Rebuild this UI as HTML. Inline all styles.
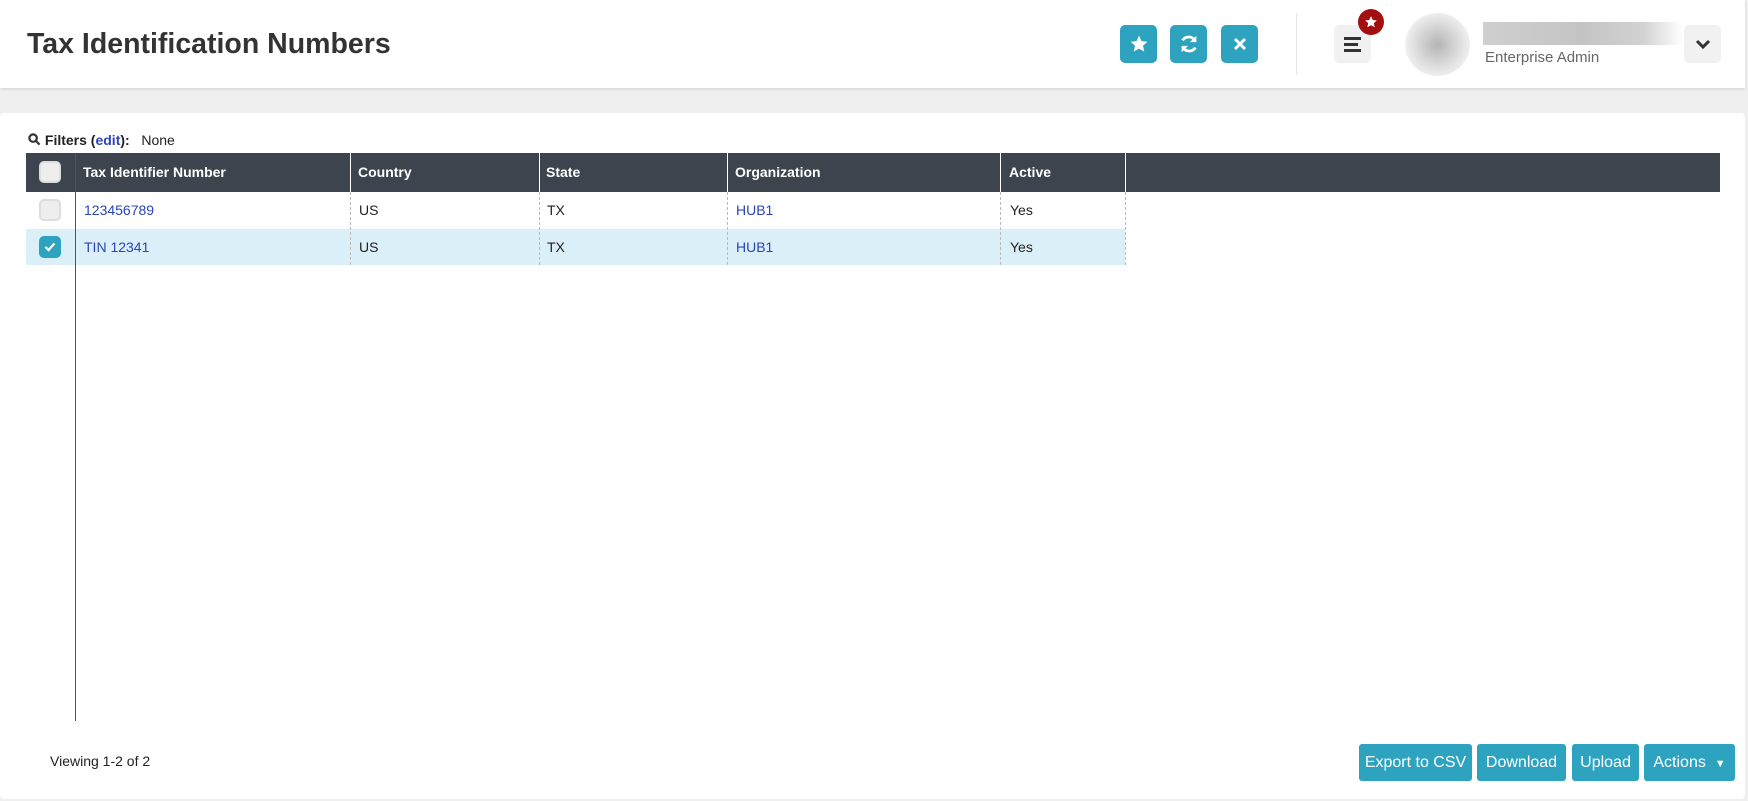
<!DOCTYPE html>
<html><head><style>
*{box-sizing:border-box;margin:0;padding:0}
body{width:1748px;height:801px;background:#efefef;font-family:"Liberation Sans",sans-serif;position:relative;overflow:hidden;color:#222}
.a{position:absolute}
.hdr{left:0;top:0;width:1745px;height:88px;background:#fff;box-shadow:0 1px 3px rgba(0,0,0,.12)}
.ib{background:#2ea3c0;border-radius:5px;width:37px;height:38px;display:flex;align-items:center;justify-content:center;color:#fff}
.gb{background:#f1f1f1;border-radius:5px;width:37px;height:38px}
.card{left:0;top:113px;width:1745px;height:686px;background:#fff;border-radius:4px}
.th{top:153px;height:39px;background:#3d444e;color:#fff;font-weight:bold;font-size:14px;line-height:39px}
.cell{font-size:14px;height:36px;line-height:36px}
.lnk{color:#2b44b8}
.btn{top:744px;height:37px;background:#2ea3c0;color:#fff;font-size:16px;line-height:37px;text-align:center;border-radius:3px}
.cb{width:22px;height:22px;border-radius:5px;background:#eee;border:2px solid #ddd}
</style></head><body>
<div class="a hdr"></div>
<div class="a" style="left:27px;top:28px;font-size:28.5px;font-weight:bold;color:#333">Tax Identification Numbers</div>
<div class="a ib" style="left:1120px;top:25px"><svg width="20" height="20" viewBox="0 0 24 24"><path fill="#fff" d="M12 2l3 6.5 7 .8-5.2 4.8 1.5 7L12 17.5 5.7 21l1.5-7L2 9.3l7-.8z"/></svg></div>
<div class="a ib" style="left:1170px;top:25px"><svg width="22" height="22" viewBox="0 0 24 24" fill="none" stroke="#fff" stroke-width="3"><path d="M19 9A8 8 0 0 0 5 8M5 15a8 8 0 0 0 14 1"/><path fill="#fff" stroke="none" d="M20 3v7h-7zM4 21v-7h7z"/></svg></div>
<div class="a ib" style="left:1221px;top:25px"><svg width="14" height="14" viewBox="0 0 14 14" stroke="#fff" stroke-width="3"><path d="M2 2l10 10M12 2L2 12"/></svg></div>
<div class="a" style="left:1296px;top:13px;width:1px;height:62px;background:#e6e6e6"></div>
<div class="a gb" style="left:1334px;top:25px"><div class="a" style="left:10px;top:12px;width:17px;height:3px;background:#333"></div><div class="a" style="left:10px;top:18px;width:14px;height:3px;background:#333"></div><div class="a" style="left:10px;top:24px;width:17px;height:3px;background:#333"></div></div>
<div class="a" style="left:1358px;top:9px;width:26px;height:26px;border-radius:50%;background:#a30f0f;display:flex;align-items:center;justify-content:center"><svg width="14" height="14" viewBox="0 0 24 24"><path fill="#fff" d="M12 2l3 6.5 7 .8-5.2 4.8 1.5 7L12 17.5 5.7 21l1.5-7L2 9.3l7-.8z"/></svg></div>
<div class="a" style="left:1405px;top:13px;width:65px;height:63px;border-radius:50%;background:radial-gradient(circle,#b4b4b4 0,#d6d6d6 40%,#f2f2f2 75%)"></div>
<div class="a" style="left:1483px;top:22px;width:200px;height:23px;background:linear-gradient(90deg,#cfcfcf,#c4c4c4 50%,#d2d2d2 80%,#fff)"></div>
<div class="a" style="left:1485px;top:49px;font-size:15px;color:#666">Enterprise Admin</div>
<div class="a gb" style="left:1684px;top:25px;display:flex;align-items:center;justify-content:center"><svg width="16" height="12" viewBox="0 0 16 12" fill="none" stroke="#333" stroke-width="3"><path d="M2 3l6 6 6-6"/></svg></div>

<div class="a card"></div>
<div class="a" style="left:28px;top:132px;font-size:14px"><svg width="13" height="13" viewBox="0 0 14 14" fill="none" stroke="#333" stroke-width="2.4" style="vertical-align:-1px"><circle cx="5.5" cy="5.5" r="4"/><path d="M8.5 8.5l4 4"/></svg> <b>Filters (<span style="color:#2b44b8">edit</span>):</b>&nbsp;&nbsp; None</div>
<div class="a th" style="left:26px;width:1694px"></div>
<div class="a cb" style="left:39px;top:161px"></div>
<div class="a" style="left:26px;top:229px;width:1099px;height:36px;background:#dbeff8"></div>
<div class="a" style="left:75px;top:153px;width:1px;height:568px;background:#555"></div>
<div class="a" style="left:350px;top:153px;width:1px;height:39px;background:#fff"></div>
<div class="a" style="left:539px;top:153px;width:1px;height:39px;background:#fff"></div>
<div class="a" style="left:727px;top:153px;width:1px;height:39px;background:#fff"></div>
<div class="a" style="left:1000px;top:153px;width:1px;height:39px;background:#fff"></div>
<div class="a" style="left:1125px;top:153px;width:1px;height:39px;background:#fff"></div>
<div class="a" style="left:350px;top:192px;height:73px;border-left:1px dashed #bbb"></div>
<div class="a" style="left:539px;top:192px;height:73px;border-left:1px dashed #bbb"></div>
<div class="a" style="left:727px;top:192px;height:73px;border-left:1px dashed #bbb"></div>
<div class="a" style="left:1000px;top:192px;height:73px;border-left:1px dashed #bbb"></div>
<div class="a" style="left:1125px;top:192px;height:73px;border-left:1px dashed #bbb"></div>
<div class="a th" style="left:83px">Tax Identifier Number</div>
<div class="a th" style="left:358px">Country</div>
<div class="a th" style="left:546px">State</div>
<div class="a th" style="left:735px">Organization</div>
<div class="a th" style="left:1009px">Active</div>
<div class="a cb" style="left:39px;top:199px"></div>
<div class="a" style="left:39px;top:236px;width:22px;height:22px;border-radius:5px;background:#2ea3c0;display:flex;align-items:center;justify-content:center"><svg width="12" height="10" viewBox="0 0 12 10" fill="none" stroke="#fff" stroke-width="2.2"><path d="M1.5 5l3 3 6-6.5"/></svg></div>
<div class="a cell lnk" style="left:84px;top:192px">123456789</div>
<div class="a cell" style="left:359px;top:192px">US</div>
<div class="a cell" style="left:547px;top:192px">TX</div>
<div class="a cell lnk" style="left:736px;top:192px">HUB1</div>
<div class="a cell" style="left:1010px;top:192px">Yes</div>
<div class="a cell lnk" style="left:84px;top:229px">TIN 12341</div>
<div class="a cell" style="left:359px;top:229px">US</div>
<div class="a cell" style="left:547px;top:229px">TX</div>
<div class="a cell lnk" style="left:736px;top:229px">HUB1</div>
<div class="a cell" style="left:1010px;top:229px">Yes</div>
<div class="a" style="left:50px;top:753px;font-size:14px">Viewing 1-2 of 2</div>
<div class="a btn" style="left:1359px;width:113px">Export to CSV</div>
<div class="a btn" style="left:1477px;width:89px">Download</div>
<div class="a btn" style="left:1572px;width:67px">Upload</div>
<div class="a btn" style="left:1644px;width:91px">Actions &nbsp;<span style="font-size:11px">▼</span></div>
</body></html>
